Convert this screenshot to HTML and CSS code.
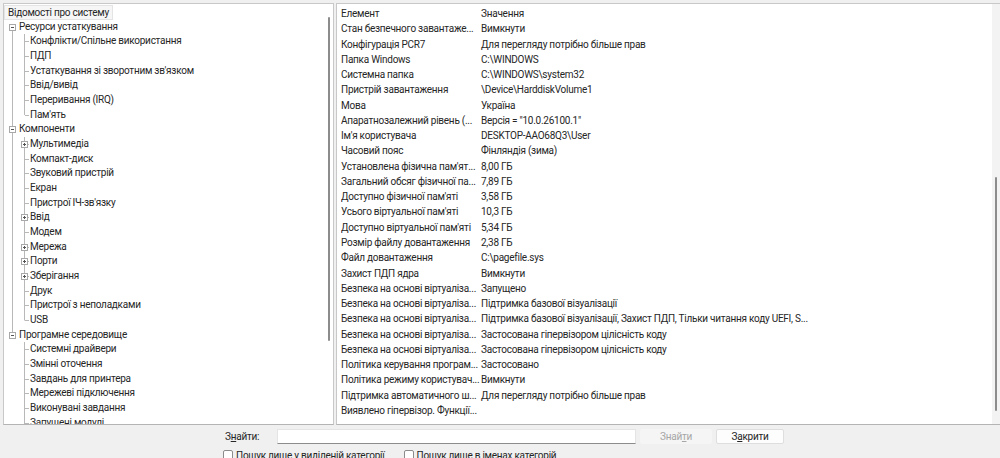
FILE: index.html
```html
<!DOCTYPE html>
<html lang="uk">
<head>
  <meta charset="UTF-8">
  <title>Відомості про систему</title>
  <link rel="stylesheet" href="styles.css">
</head>
<body>

<div class="window">

  <div class="panes">

    <!-- Left: category tree -->
    <div class="pane tree-pane">
      <div class="tree">
        <div class="row root"><span class="sel">Відомості про систему</span></div>

        <div class="row node first"><span class="exp minus"></span>Ресурси устаткування</div>
        <div class="row kid g">Конфлікти/Спільне використання</div>
        <div class="row kid g">ПДП</div>
        <div class="row kid g">Устаткування зі зворотним зв'язком</div>
        <div class="row kid g">Ввід/вивід</div>
        <div class="row kid g">Переривання (IRQ)</div>
        <div class="row kid g last">Пам'ять</div>

        <div class="row node"><span class="exp minus"></span>Компоненти</div>
        <div class="row kid g sub"><span class="exp plus"></span>Мультимедіа</div>
        <div class="row kid g">Компакт-диск</div>
        <div class="row kid g">Звуковий пристрій</div>
        <div class="row kid g">Екран</div>
        <div class="row kid g">Пристрої ІЧ-зв'язку</div>
        <div class="row kid g sub"><span class="exp plus"></span>Ввід</div>
        <div class="row kid g">Модем</div>
        <div class="row kid g sub"><span class="exp plus"></span>Мережа</div>
        <div class="row kid g sub"><span class="exp plus"></span>Порти</div>
        <div class="row kid g sub"><span class="exp plus"></span>Зберігання</div>
        <div class="row kid g">Друк</div>
        <div class="row kid g">Пристрої з неполадками</div>
        <div class="row kid g last">USB</div>

        <div class="row node end"><span class="exp minus"></span>Програмне середовище</div>
        <div class="row kid">Системні драйвери</div>
        <div class="row kid">Змінні оточення</div>
        <div class="row kid">Завдань для принтера</div>
        <div class="row kid">Мережеві підключення</div>
        <div class="row kid">Виконувані завдання</div>
        <div class="row kid">Запущені модулі</div>
      </div>
      <div class="vscroll">
        <div class="thumb left-thumb"></div>
      </div>
    </div>

    <!-- Right: item / value list -->
    <div class="pane list-pane">
      <div class="list" id="list"></div>
      <div class="vscroll track">
        <div class="thumb right-thumb"></div>
      </div>
    </div>

  </div>

  <!-- Find bar -->
  <div class="findbar">
    <div class="find-row">
      <label class="find-label">З<u>н</u>айти:</label>
      <div class="input"></div>
      <button class="btn disabled">Знай<u>т</u>и</button>
      <button class="btn">З<u>а</u>крити</button>
    </div>
    <div class="check-row">
      <span class="check"><span class="box"></span>Пошук лише у виділеній категорії</span>
      <span class="check"><span class="box"></span>Пошук лише в іменах категорій</span>
    </div>
  </div>

</div>

<script>
  // item / value pairs as shown in the list view
  const rows = [
    ["Елемент", "Значення"],
    ["Стан безпечного завантаже...", "Вимкнути"],
    ["Конфігурація PCR7", "Для перегляду потрібно більше прав"],
    ["Папка Windows", "C:\\WINDOWS"],
    ["Системна папка", "C:\\WINDOWS\\system32"],
    ["Пристрій завантаження", "\\Device\\HarddiskVolume1"],
    ["Мова", "Україна"],
    ["Апаратнозалежний рівень (...", "Версія = \"10.0.26100.1\""],
    ["Ім'я користувача", "DESKTOP-AAO68Q3\\User"],
    ["Часовий пояс", "Фінляндія (зима)"],
    ["Установлена фізична пам'ят...", "8,00 ГБ"],
    ["Загальний обсяг фізичної па...", "7,89 ГБ"],
    ["Доступно фізичної пам'яті", "3,58 ГБ"],
    ["Усього віртуальної пам'яті", "10,3 ГБ"],
    ["Доступно віртуальної пам'яті", "5,34 ГБ"],
    ["Розмір файлу довантаження", "2,38 ГБ"],
    ["Файл довантаження", "C:\\pagefile.sys"],
    ["Захист ПДП ядра", "Вимкнути"],
    ["Безпека на основі віртуаліза...", "Запущено"],
    ["Безпека на основі віртуаліза...", "Підтримка базової візуалізації"],
    ["Безпека на основі віртуаліза...", "Підтримка базової візуалізації, Захист ПДП, Тільки читання коду UEFI, S..."],
    ["Безпека на основі віртуаліза...", "Застосована гіпервізором цілісність коду"],
    ["Безпека на основі віртуаліза...", "Застосована гіпервізором цілісність коду"],
    ["Політика керування програм...", "Застосовано"],
    ["Політика режиму користувач...", "Вимкнути"],
    ["Підтримка автоматичного ш...", "Для перегляду потрібно більше прав"],
    ["Виявлено гіпервізор. Функції...", ""]
  ];

  const list = document.getElementById("list");
  rows.forEach(([k, v]) => {
    const row = document.createElement("div");
    row.className = "item";
    row.innerHTML = `<span class="k"></span><span class="v"></span>`;
    row.children[0].textContent = k;
    row.children[1].textContent = v;
    list.appendChild(row);
  });
</script>

</body>
</html>
```

FILE: styles.css
```css
body {
  margin: 0;
  background: #f0f0f0;
  color: #262626;
  font-family: Roboto, "Noto Sans", sans-serif;
  font-size: 10px;
  letter-spacing: -0.25px;
  overflow: hidden;
}

.window {
  width: 1000px;
  height: 458px;
  display: flex;
  flex-direction: column;
}

.panes {
  display: flex;
  gap: 2px;
  padding: 3px 0 0 3px;
  height: 422px;
}

.pane {
  display: flex;
  background: #fff;
  border: 1px solid #c8c8c8;
  box-sizing: border-box;
  overflow: hidden;
}

.tree-pane {
  width: 331px;
  border-bottom-color: #b4b4b4;
}

.list-pane {
  flex: 1;
  border-right: 0;
  border-bottom-color: #b4b4b4;
}

/* Scrollbars (Windows 11 thin style) */
.vscroll {
  width: 9px;
  flex: none;
  display: flex;
  justify-content: center;
}

.vscroll.track {
  width: 8px;
  background: #f3f3f3;
}

.thumb {
  width: 2px;
  border-radius: 1px;
  background: #8c8c8c;
}

.left-thumb {
  margin-top: 13px;
  height: 324px;
}

.right-thumb {
  margin-top: 173px;
  height: 234px;
}

/* Tree */
.tree {
  flex: 1;
  padding: 1px 0 0 0;
  white-space: nowrap;
  overflow: hidden;
}

.row {
  display: flex;
  align-items: center;
  height: 14.68px;
  line-height: 14.68px;
}

.root {
  padding-left: 1px;
}

.root .sel {
  padding: 0 3px;
  background: #f6f6f6;
  outline: 1px solid #e4e4e4;
  line-height: 13px;
}

.node {
  padding-left: 5px;
}

.node .exp {
  margin-right: 3px;
}

/* tree connector lines drawn as backgrounds */
.node.first {
  background: linear-gradient(#b8b8b8, #b8b8b8) 8px 100% / 1px 50% no-repeat;
}

.node {
  background: linear-gradient(#b8b8b8, #b8b8b8) 8px 0 / 1px 100% no-repeat;
}

.node.end {
  background: linear-gradient(#b8b8b8, #b8b8b8) 8px 0 / 1px 50% no-repeat;
}

.kid {
  padding-left: 26px;
  background:
    linear-gradient(#b8b8b8, #b8b8b8) 20px 0 / 1px 100% no-repeat,
    linear-gradient(#b8b8b8, #b8b8b8) 21px 50% / 4px 1px no-repeat;
}

.kid.last {
  background:
    linear-gradient(#b8b8b8, #b8b8b8) 20px 0 / 1px 50% no-repeat,
    linear-gradient(#b8b8b8, #b8b8b8) 21px 50% / 4px 1px no-repeat;
}

.kid.g {
  background:
    linear-gradient(#b8b8b8, #b8b8b8) 8px 0 / 1px 100% no-repeat,
    linear-gradient(#b8b8b8, #b8b8b8) 20px 0 / 1px 100% no-repeat,
    linear-gradient(#b8b8b8, #b8b8b8) 21px 50% / 4px 1px no-repeat;
}

.kid.g.last {
  background:
    linear-gradient(#b8b8b8, #b8b8b8) 8px 0 / 1px 100% no-repeat,
    linear-gradient(#b8b8b8, #b8b8b8) 20px 0 / 1px 50% no-repeat,
    linear-gradient(#b8b8b8, #b8b8b8) 21px 50% / 4px 1px no-repeat;
}

.kid.sub {
  padding-left: 17px;
}

.kid.sub .exp {
  margin-right: 2px;
}

/* expander boxes */
.exp {
  flex: none;
  width: 7px;
  height: 7px;
  box-sizing: border-box;
  border: 1px solid #a8a8a8;
  background-color: #fff;
}

.exp.minus {
  background-image: linear-gradient(#555, #555);
  background-position: 1px 2px;
  background-size: 3px 1px;
  background-repeat: no-repeat;
}

.exp.plus {
  background-image: linear-gradient(#555, #555), linear-gradient(#555, #555);
  background-position: 1px 2px, 2px 1px;
  background-size: 3px 1px, 1px 3px;
  background-repeat: no-repeat;
}

/* List view */
.list {
  flex: 1;
  padding: 2px 0 0 4px;
  white-space: nowrap;
  overflow: hidden;
}

.item {
  display: flex;
  height: 15.27px;
  line-height: 15.27px;
}

.item .k {
  width: 139px;
  margin-right: 1px;
  overflow: hidden;
  flex: none;
}

/* Find bar */
.findbar {
  flex: 1;
  display: flex;
  flex-direction: column;
}

.find-row {
  display: flex;
  align-items: center;
  height: 19px;
  padding: 2px 0 0 225px;
}

.find-label {
  width: 52px;
}

.input {
  width: 359px;
  height: 15px;
  box-sizing: border-box;
  background: #fff;
  border: 1px solid #e4e4e4;
  border-bottom-color: #8c8c8c;
  margin-right: 4px;
}

.btn {
  font: inherit;
  color: inherit;
  letter-spacing: inherit;
  height: 15px;
  padding: 0;
  margin-right: 4px;
  border: 1px solid #dedede;
  border-radius: 2px;
  background: #fdfdfd;
  line-height: 13px;
  text-align: center;
}

.btn:first-of-type {
  width: 72px;
}

.btn + .btn {
  width: 68px;
}

.btn.disabled {
  color: #a6a6a6;
  background: #f5f5f5;
  border-color: #f5f5f5;
}

.btn.disabled u {
  text-decoration-color: #a6a6a6;
}

.check-row {
  display: flex;
  align-items: center;
  padding: 3px 0 0 223px;
  gap: 19px;
  height: 12px;
}

.check {
  display: flex;
  align-items: center;
}

.box {
  width: 10px;
  height: 10px;
  box-sizing: border-box;
  border: 1px solid #8c8c8c;
  border-radius: 2px;
  background: #fff;
  margin-right: 3px;
}
```
